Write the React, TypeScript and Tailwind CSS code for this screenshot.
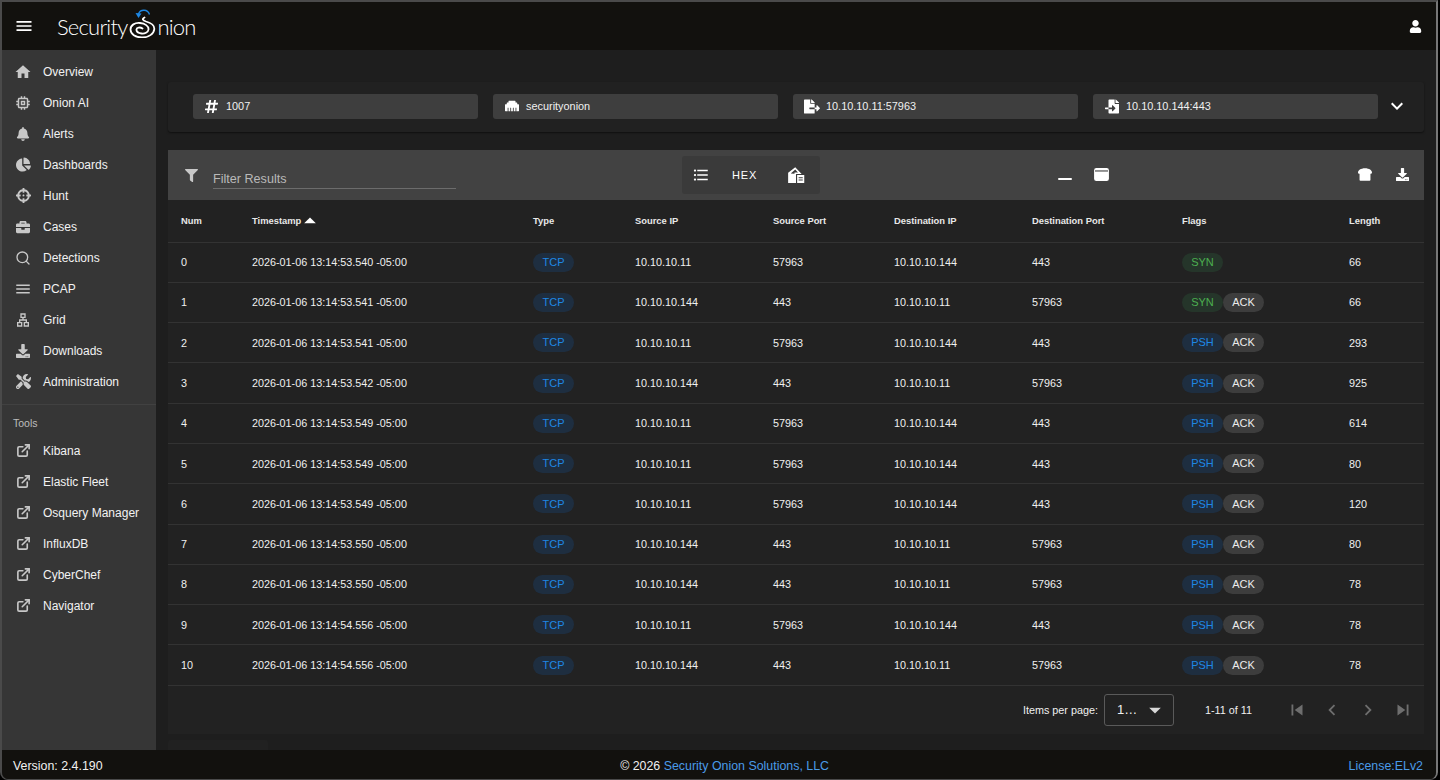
import { FaBell, FaBriefcase, FaCrosshairs, FaDownload, FaTools, FaHashtag, FaEthernet, FaFileExport, FaFileImport, FaFilter, FaBreadSlice, FaChartPie, FaUser } from "react-icons/fa";
import { FiExternalLink, FiSearch } from "react-icons/fi";
import { MdFormatListBulleted, MdKeyboardArrowDown, MdArrowDropDown, MdSkipPrevious, MdSkipNext, MdChevronLeft, MdChevronRight, MdArrowDropUp, MdMenu, MdHome, MdMemory, MdOutlineLan } from "react-icons/md";

const navItems = [
  { label: "Overview", icon: MdHome, size: "h-[18px] w-[18px]" },
  { label: "Onion AI", icon: MdMemory, size: "h-[18px] w-[18px]" },
  { label: "Alerts", icon: FaBell, size: "h-[14px] w-[14px]" },
  { label: "Dashboards", icon: FaChartPie, size: "h-[15px] w-[15px]" },
  { label: "Hunt", icon: FaCrosshairs, size: "h-[15px] w-[15px]" },
  { label: "Cases", icon: FaBriefcase, size: "h-[14px] w-[14px]" },
  { label: "Detections", icon: FiSearch, size: "h-[16px] w-[16px]" },
  { label: "PCAP", icon: MdMenu, size: "h-[18px] w-[18px]" },
  { label: "Grid", icon: MdOutlineLan, size: "h-[16px] w-[16px]" },
  { label: "Downloads", icon: FaDownload, size: "h-[14px] w-[14px]" },
  { label: "Administration", icon: FaTools, size: "h-[15px] w-[15px]" },
];

const tools = ["Kibana", "Elastic Fleet", "Osquery Manager", "InfluxDB", "CyberChef", "Navigator"];

const A = "10.10.10.11";
const B = "10.10.10.144";

const rows = [
  ["0", "53.540", A, "57963", B, "443", "SYN", false, "66"],
  ["1", "53.541", B, "443", A, "57963", "SYN", true, "66"],
  ["2", "53.541", A, "57963", B, "443", "PSH", true, "293"],
  ["3", "53.542", B, "443", A, "57963", "PSH", true, "925"],
  ["4", "53.549", A, "57963", B, "443", "PSH", true, "614"],
  ["5", "53.549", A, "57963", B, "443", "PSH", true, "80"],
  ["6", "53.549", A, "57963", B, "443", "PSH", true, "120"],
  ["7", "53.550", B, "443", A, "57963", "PSH", true, "80"],
  ["8", "53.550", B, "443", A, "57963", "PSH", true, "78"],
  ["9", "54.556", A, "57963", B, "443", "PSH", true, "78"],
  ["10", "54.556", B, "443", A, "57963", "PSH", true, "78"],
] as const;

const Pill = ({ text, tone }: { text: string; tone: "blue" | "green" | "gray" }) => (
  <span
    className={`inline-flex h-[19px] w-[41px] items-center justify-center rounded-full text-[11px] ${
      tone === "blue"
        ? "bg-[#1e2e40] text-[#1e88e5]"
        : tone === "green"
          ? "bg-[#25352a] text-[#4caf50]"
          : "bg-[#3d3d3d] text-[#ececec]"
    }`}
  >
    {text}
  </span>
);

const InfoField = ({ icon: Icon, text, size }: { icon: any; text: string; size: string }) => (
  <div className="-mt-[1px] flex h-[25px] w-[285px] shrink-0 items-center gap-[6px] rounded-[3px] bg-[#3e3e3e] pb-[1px] pl-[10px] text-[10.9px] text-[#f0f0f0]">
    <span className="flex w-[17px] justify-center">
      <Icon className={`${size} text-white`} />
    </span>
    <span>{text}</span>
  </div>
);

// spiral mark that stands in for the O of the wordmark
const OnionMark = () => (
  <svg viewBox="0 0 28 30" className="mx-[1px] mt-[-6px] h-[30px] w-[28px] shrink-0" fill="none">
    <path d="M10.5 6 C12 1.5 19.5 0.5 21.5 6.5" stroke="#1e88e5" strokeWidth="1.4" />
    <path d="M7.5 5 L13.5 5.5 L10.5 10 Z" fill="#1e88e5" />
    <path
      d="M16.5 9.5 C13.5 11 15 12.5 18 13.5 C23.5 15 26.5 17.5 26.3 21 C26 26 20.5 29.5 14 29.5 C7.5 29.5 2.5 26 2.5 21.5 C2.5 17 7 14.5 12 15 C17 15.5 20.8 18 20.5 21.5 C20.2 24.5 16.5 26 13.5 25.5 C10.5 25 8.2 23.3 8.5 21.3 C8.8 19.5 12 18.8 14.5 20.5"
      stroke="#fff"
      strokeWidth="1.8"
      strokeLinecap="round"
    />
  </svg>
);

// house with a small document in the corner
const HouseDocIcon = () => (
  <svg viewBox="0 0 24 24" className="ml-[30px] h-[18px] w-[18px]" fill="currentColor">
    <path d="M11 1.5 1.5 9v13.5H12V10.5h7.5L11 1.5Zm0 3.2 3.6 3.8H10v1.8L5 10l6-5.3Z" fillRule="evenodd" />
    <path d="M13.5 12H23v10.5h-9.5V12Zm2 3v1.4h5.5V15h-5.5Zm0 3v1.4h5.5V18h-5.5Z" fillRule="evenodd" />
  </svg>
);

const WindowIcon = () => (
  <svg viewBox="0 0 16 14" className="mb-[2px] ml-[22px] h-[13px] w-[15px]">
    <path d="M2.5 0h11A2.5 2.5 0 0 1 16 2.5v9a2.5 2.5 0 0 1-2.5 2.5h-11A2.5 2.5 0 0 1 0 11.5v-9A2.5 2.5 0 0 1 2.5 0Z" fill="#fff" />
    <rect x="1" y="2.6" width="14" height="1.2" fill="#424242" />
  </svg>
);

export default function App() {
  return (
    <div className="h-[780px] w-[1440px] overflow-hidden bg-black pr-[2px] font-['Liberation_Sans',Arial,sans-serif] text-[#f0f0f0]">
      <div className="flex h-full flex-col overflow-hidden rounded-b-[8px] border-x-2 border-b border-t-2 border-[#4a4a4a] border-r-[#777777] bg-[#1e1e1e]">
        <header className="flex h-[48px] shrink-0 items-center justify-between bg-[#12110e] pl-[14px] pr-[14px]">
          <div className="flex items-center">
            <MdMenu className="h-[16px] w-[16px] scale-125 text-white" />
            <div className="ml-[25px] flex items-center font-['Lato',sans-serif] text-[22px] font-light tracking-[-0.8px] text-white">
              <span>Security</span>
              <OnionMark />
              <span>nion</span>
            </div>
          </div>
          <FaUser className="h-[13px] w-[13px] text-white" />
        </header>

        <div className="flex min-h-0 flex-1">
          <aside className="flex w-[154px] shrink-0 flex-col bg-[#363636] pt-[6px]">
            {navItems.map(({ label, icon: Icon, size }) => (
              <div key={label} className="flex h-[31px] shrink-0 items-center text-[12px] text-[#f2f2f2]">
                <span className="flex w-[41px] justify-center pl-[1px]">
                  <Icon className={`${size} text-[#c8c8c8]`} />
                </span>
                <span>{label}</span>
              </div>
            ))}
            <div className="mt-[7px] border-t border-[#414141] pl-[11px] pt-[12px] text-[10.5px] leading-[12px] text-[#bdbdbd]">Tools</div>
            <div className="mt-[6px]">
              {tools.map((t) => (
                <div key={t} className="flex h-[31px] items-center text-[12px] text-[#f2f2f2]">
                  <span className="flex w-[41px] justify-center pl-[1px]">
                    <FiExternalLink strokeWidth={2.6} className="h-[15px] w-[15px] text-[#c8c8c8]" />
                  </span>
                  <span>{t}</span>
                </div>
              ))}
            </div>
          </aside>

          <main className="flex min-w-0 flex-1 flex-col pl-[12px] pr-[12px] pt-[32px]">
            <section className="flex h-[50px] shrink-0 items-center gap-[15px] rounded-[3px] bg-[#212121] pl-[25px] shadow-[0_1px_2px_rgba(0,0,0,0.5)]">
              <InfoField icon={FaHashtag} text="1007" size="h-[15px] w-[15px]" />
              <InfoField icon={FaEthernet} text="securityonion" size="h-[14px] w-[16px]" />
              <InfoField icon={FaFileExport} text="10.10.10.11:57963" size="h-[15px] w-[16px]" />
              <InfoField icon={FaFileImport} text="10.10.10.144:443" size="h-[15px] w-[14px]" />
              <MdKeyboardArrowDown className="-mt-[2px] ml-[-8px] h-[24px] w-[24px] shrink-0 text-white" />
            </section>

            <section className="mt-[18px] flex shrink-0 flex-col bg-[#222222]">
              <div className="flex h-[50px] items-center bg-[#424242] pl-[17px] pr-[15px]">
                <FaFilter className="h-[13px] w-[13px] text-[#c8c8c8]" />
                <div className="ml-[15px] mt-[11px] w-[243px] border-b border-[#6c6c6c] pb-[2px] text-[12.6px] leading-[14px] text-[#b9b9b9]">Filter Results</div>
                <div className="ml-[226px] flex h-[38px] w-[138px] items-center rounded-[3px] bg-[#3a3a3a] pl-[10px] text-[11px] tracking-[0.8px] text-white">
                  <MdFormatListBulleted className="h-[18px] w-[18px]" />
                  <span className="ml-[22px]">HEX</span>
                  <HouseDocIcon />
                </div>
                <span className="ml-[238px] mt-[7px] h-[2px] w-[14px] rounded-full bg-white" />
                <WindowIcon />
                <FaBreadSlice className="mb-[2px] ml-auto h-[13px] w-[14px] text-white" />
                <FaDownload className="mb-[2px] ml-[24px] h-[13px] w-[13px] text-white" />
              </div>

              <table className="w-full table-fixed border-collapse text-left text-[10.8px]">
                <colgroup>
                  <col className="w-[71px]" />
                  <col className="w-[281px]" />
                  <col className="w-[102px]" />
                  <col className="w-[138px]" />
                  <col className="w-[121px]" />
                  <col className="w-[138px]" />
                  <col className="w-[150px]" />
                  <col className="w-[167px]" />
                  <col />
                </colgroup>
                <thead>
                  <tr className="h-[42px] border-b border-[#333333] text-[9.4px] font-bold text-[#e8e8e8]">
                    <th className="pl-[13px]">Num</th>
                    <th className="pl-[13px]">
                      <span className="inline-flex items-center">
                        Timestamp
                        <MdArrowDropUp className="-my-[6px] -ml-[5px] h-[28px] w-[28px] text-white" />
                      </span>
                    </th>
                    <th className="pl-[13px]">Type</th>
                    <th className="pl-[13px]">Source IP</th>
                    <th className="pl-[13px]">Source Port</th>
                    <th className="pl-[13px]">Destination IP</th>
                    <th className="pl-[13px]">Destination Port</th>
                    <th className="pl-[13px]">Flags</th>
                    <th className="pl-[13px]">Length</th>
                  </tr>
                </thead>
                <tbody>
                  {rows.map((r) => (
                    <tr key={r[0]} className="h-[40.3px] border-b border-[#333333] text-[#f0f0f0]">
                      <td className="pl-[13px]">{r[0]}</td>
                      <td className="pl-[13px]">{`2026-01-06 13:14:${r[1]} -05:00`}</td>
                      <td className="pl-[13px]"><Pill text="TCP" tone="blue" /></td>
                      <td className="pl-[13px]">{r[2]}</td>
                      <td className="pl-[13px]">{r[3]}</td>
                      <td className="pl-[13px]">{r[4]}</td>
                      <td className="pl-[13px]">{r[5]}</td>
                      <td className="pl-[13px]">
                        <span className="flex">
                          <Pill text={r[6]} tone={r[6] === "SYN" ? "green" : "blue"} />
                          {r[7] && <Pill text="ACK" tone="gray" />}
                        </span>
                      </td>
                      <td className="pl-[13px]">{r[8]}</td>
                    </tr>
                  ))}
                </tbody>
              </table>

              <div className="flex h-[48px] items-center pr-[10px] text-[10.8px] text-[#f0f0f0]">
                <span className="ml-auto">Items per page:</span>
                <div className="ml-[6px] flex h-[32px] w-[70px] items-center rounded-[3px] border border-[#5a5a5a] pl-[12px] pr-[4px] text-[13px]">
                  <span>1…</span>
                  <MdArrowDropDown className="ml-auto h-[28px] w-[28px] text-[#d8d8d8]" />
                </div>
                <span className="ml-[31px]">1-11 of 11</span>
                <MdSkipPrevious className="ml-[34px] h-[22px] w-[22px] text-[#6e6e6e]" />
                <MdChevronLeft className="ml-[13px] h-[22px] w-[22px] text-[#6e6e6e]" />
                <MdChevronRight className="ml-[14px] h-[22px] w-[22px] text-[#6e6e6e]" />
                <MdSkipNext className="ml-[13px] h-[22px] w-[22px] text-[#6e6e6e]" />
              </div>
            </section>

            <div className="mt-[6px] h-[20px] w-[100px] shrink-0 rounded-t-[3px] bg-[#212121]" />
          </main>
        </div>

        <footer className="flex h-[29px] shrink-0 items-center justify-between bg-[#12110e] pl-[11px] pr-[13px] pt-[3px] text-[12.4px] text-[#f0f0f0]">
          <span>Version: 2.4.190</span>
          <span className="mr-[2px]">© 2026 <span className="text-[#4a9be8]">Security Onion Solutions, LLC</span></span>
          <span className="text-[#4a9be8]">License:ELv2</span>
        </footer>
      </div>
    </div>
  );
}
